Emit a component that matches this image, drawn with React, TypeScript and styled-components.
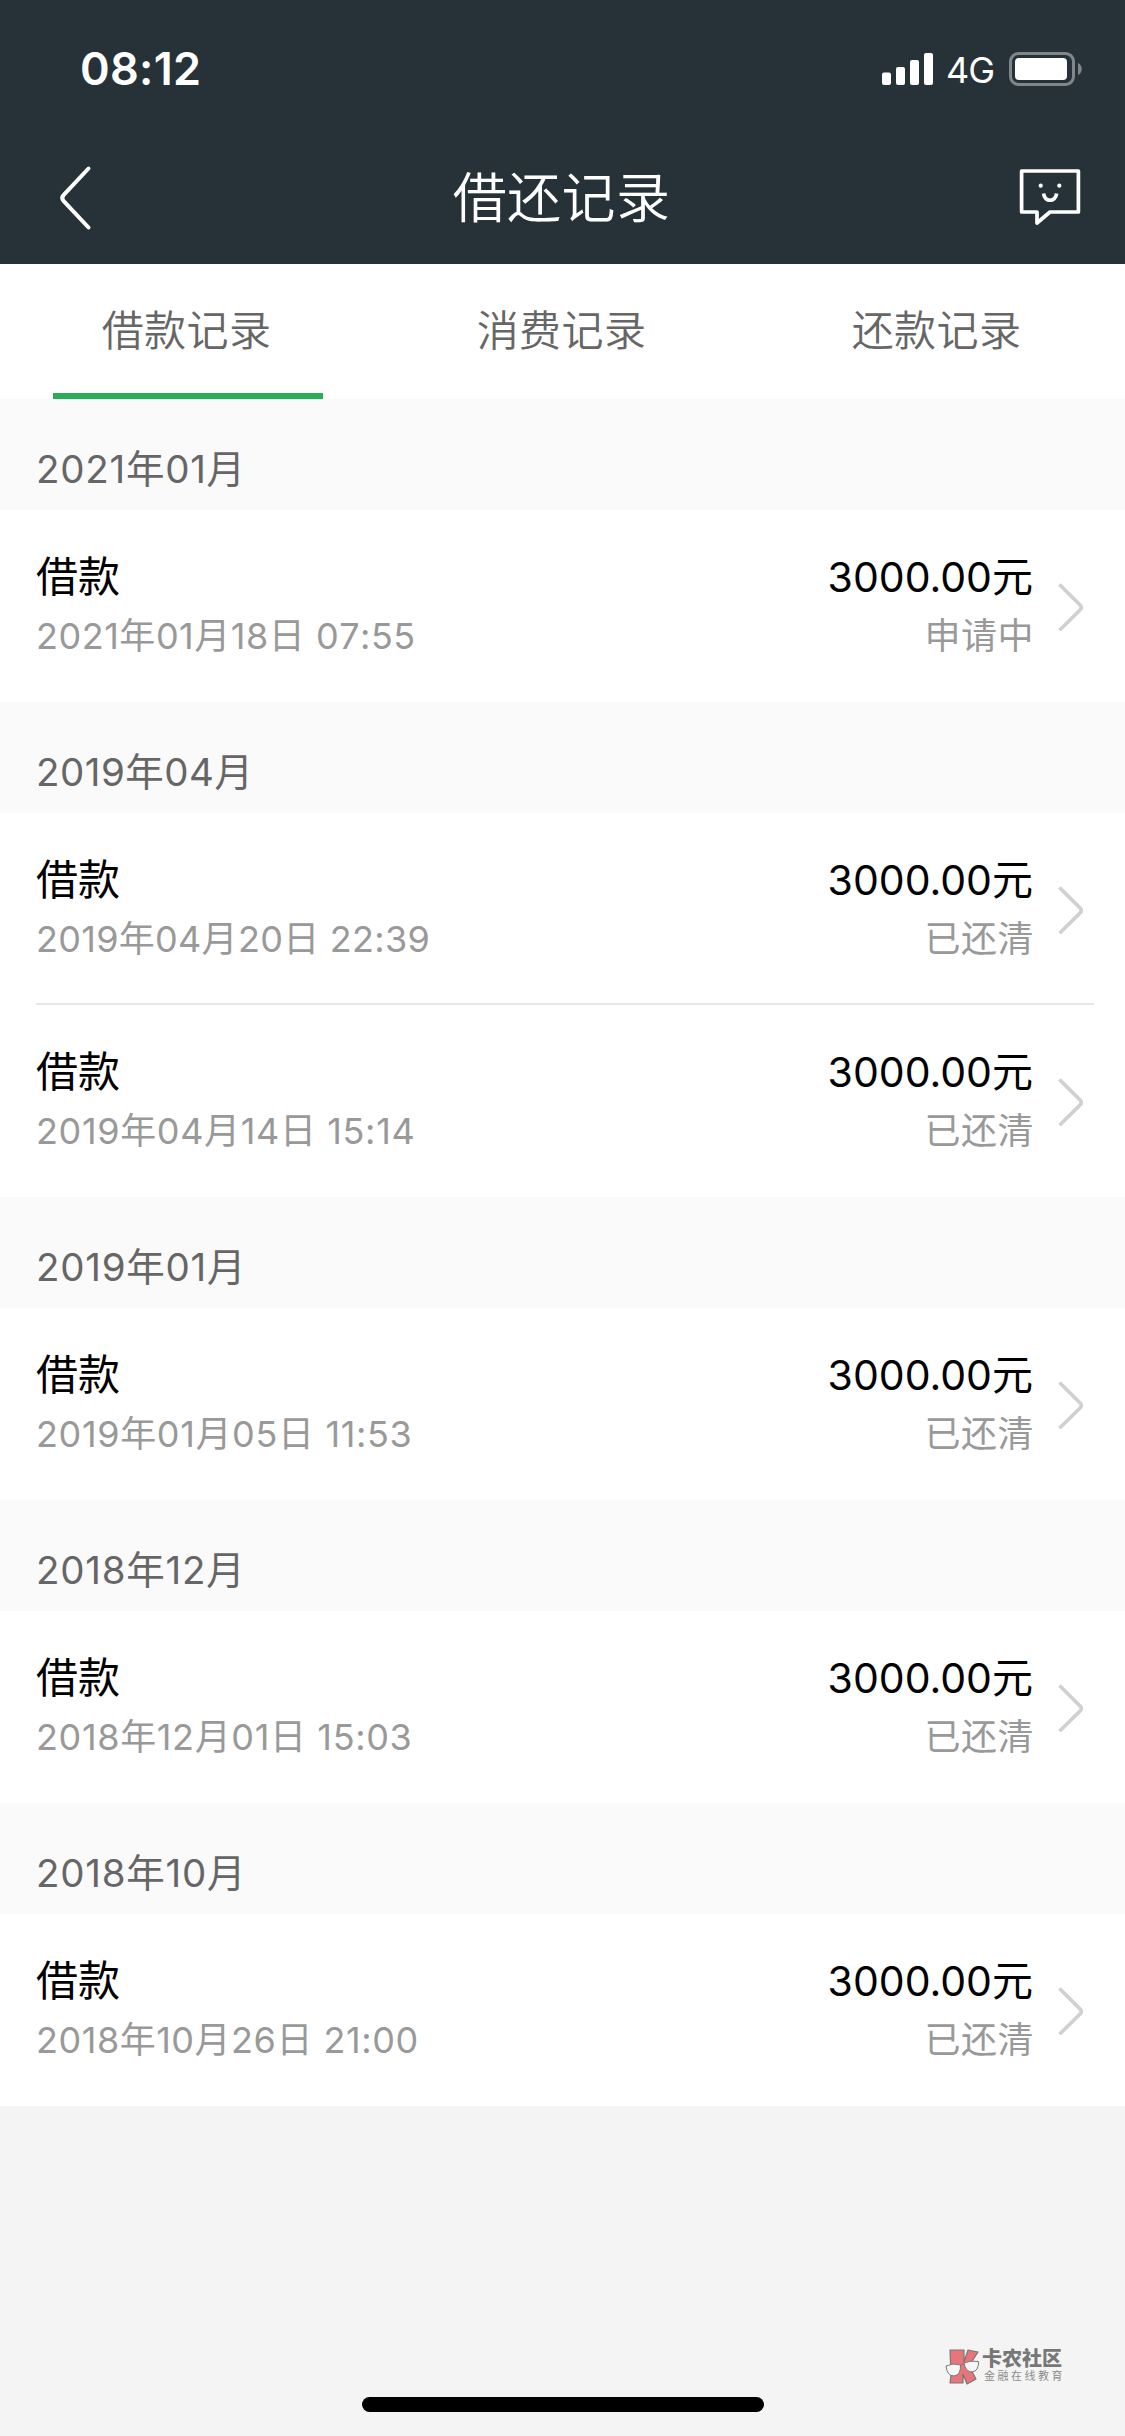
import React from "react";
import styled, { createGlobalStyle } from "styled-components";

const GlobalStyle = createGlobalStyle`
  *, *::before, *::after { box-sizing: border-box; }
  body {
    margin: 0;
    background: #f4f4f4;
    font-family: Inter, "Noto Sans CJK SC", sans-serif;
  }
`;

const Screen = styled.div`
  width: 1125px;
  height: 2436px;
  display: flex;
  flex-direction: column;
  background: #f4f4f4;
  overflow: hidden;
`;

const Header = styled.header`
  height: 264px;
  flex: none;
  background: #263238;
  color: #fff;
`;

const StatusBar = styled.div`
  height: 138px;
  display: flex;
  align-items: center;
  justify-content: space-between;
  padding: 0 43px 0 80px;
`;

const Clock = styled.span`
  font-size: 45px;
  font-weight: 600;
  line-height: 54px;
  letter-spacing: 0.3px;
`;

const Indicators = styled.div`
  display: flex;
  align-items: center;
`;

const Network = styled.span`
  width: 76px;
  padding-left: 13px;
  font-size: 36px;
  line-height: 44px;
  letter-spacing: -1px;
  padding-top: 1px;
`;

const NavBar = styled.div`
  height: 126px;
  display: grid;
  grid-template-columns: 200px 1fr 200px;
  align-items: center;
`;

const BackButton = styled.div`
  display: flex;
  padding: 0 0 6px 56px;
`;

const Title = styled.h1`
  margin: 0;
  padding-bottom: 4px;
  padding-right: 2px;
  text-align: center;
  font-size: 54px;
  line-height: 72px;
  letter-spacing: 0.4px;
  font-weight: 350;
`;

const ChatButton = styled.div`
  display: flex;
  justify-content: flex-end;
  padding: 0 43px 8px 0;
`;

const Tabs = styled.nav`
  height: 135px;
  flex: none;
  display: grid;
  grid-template-columns: repeat(3, 1fr);
  background: #fff;
`;

const Tab = styled.div<{ $active?: boolean }>`
  width: 270px;
  justify-self: center;
  padding: 37px 2px 0 0;
  text-align: center;
  font-size: 42px;
  line-height: 60px;
  letter-spacing: 0.4px;
  font-weight: 350;
  color: #666;
  border-bottom: 6px solid ${(p) => (p.$active ? "#27ae56" : "transparent")};
`;

const MonthHeading = styled.h2<{ $tracking: number }>`
  margin: 0;
  height: 111px;
  padding: 41px 36px 0;
  background: #fafafa;
  color: #666;
  font-size: 38.5px;
  line-height: 58px;
  letter-spacing: ${(p) => p.$tracking}px;
  font-kerning: none;
  font-weight: 400;
`;

const Row = styled.div<{ $divided?: boolean }>`
  height: 192px;
  display: flex;
  align-items: flex-start;
  margin-left: 36px;
  margin-right: 31px;
  padding-top: 37px;
  border-bottom: ${(p) => (p.$divided ? "2px solid #e6e6e6" : "0")};
`;

const Group = styled.section`
  background: #fff;
  flex: none;
`;

const Details = styled.div<{ $end?: boolean }>`
  flex: ${(p) => (p.$end ? "none" : "1")};
  display: flex;
  flex-direction: column;
  text-align: ${(p) => (p.$end ? "right" : "left")};
`;

const Primary = styled.div`
  color: #000;
  font-size: 41px;
  line-height: 60px;
`;

const LoanName = styled(Primary)`
  font-size: 42px;
`;

const LoanDate = styled.div<{ $tracking: number }>`
  color: #999;
  font-size: 36px;
  line-height: 58px;
  letter-spacing: ${(p) => p.$tracking}px;
  font-kerning: none;
`;

const LoanStatus = styled.div`
  color: #999;
  font-size: 36px;
  line-height: 58px;
  letter-spacing: 0.5px;
  margin-right: -1px;
`;

const Arrow = styled.div`
  width: 61px;
  padding: 34px 0 0 24px;
`;

const Footer = styled.footer`
  flex: 1;
  display: flex;
  flex-direction: column;
  justify-content: flex-end;
  align-items: center;
  padding-bottom: 24px;
`;

const Brand = styled.div`
  align-self: flex-end;
  display: flex;
  gap: 3px;
  margin: 0 61px 12px 0;
`;

const BrandText = styled.div`
  width: 82px;
  white-space: nowrap;
`;

const BrandName = styled.div`
  font-size: 20px;
  line-height: 20px;
  font-weight: 900;
  color: #777;
`;

const BrandTagline = styled.div`
  padding-left: 2px;
  font-size: 11px;
  line-height: 15px;
  letter-spacing: 2.5px;
  color: #8c8c8c;
`;

const HomeIndicator = styled.div`
  width: 402px;
  height: 15px;
  border-radius: 8px;
  background: #000;
`;

const SignalIcon = () => (
  <svg width="51" height="34" viewBox="0 0 51 34" fill="#fff">
    <rect x="0" y="20.5" width="9" height="12.5" rx="2" />
    <rect x="14" y="15" width="9" height="18" rx="2" />
    <rect x="28" y="8" width="9" height="25" rx="2" />
    <rect x="42" y="1" width="9" height="32" rx="2" />
  </svg>
);

const BatteryIcon = () => (
  <svg width="73" height="34" viewBox="0 0 73 34">
    <rect x="1.5" y="1.5" width="63" height="31" rx="8" fill="none" stroke="#7f878b" strokeWidth="3" />
    <rect x="6" y="6" width="52" height="22" rx="4" fill="#fff" />
    <path d="M69 11c5 2 5 10 0 12z" fill="#7f878b" />
  </svg>
);

const BackIcon = () => (
  <svg width="38" height="66" viewBox="0 0 38 66" fill="none" stroke="#fff" strokeWidth="4" strokeLinecap="round">
    <path d="M32.5 3.5 7.5 30.2Q5 33 7.5 35.8L32.5 62.5" />
  </svg>
);

const ChatIcon = () => (
  <svg width="64" height="60" viewBox="0 0 64 60" fill="none" stroke="#fff" strokeWidth="3.7">
    <path d="M3.6 4H60.4V45H32L19 56V45H3.6Z" strokeLinejoin="round" />
    <path d="M25.6 26.5C26.5 35.5 37.5 35.5 38.6 26.5" />
    <circle cx="22.7" cy="18.7" r="2.1" fill="#fff" stroke="none" />
    <circle cx="41.3" cy="18.7" r="2.1" fill="#fff" stroke="none" />
  </svg>
);

const ChevronIcon = () => (
  <svg width="28" height="50" viewBox="0 0 28 50" fill="none" stroke="#d0d0d0" strokeWidth="3.6">
    <path d="M2.500 3.500 23.300 24.200Q25.300 26.500 23.300 28.800L2.500 49.200" />
  </svg>
);

const BrandIcon = () => (
  <svg width="34" height="36" viewBox="0 0 34 36">
    <g fill="#e8757c" stroke="#777" strokeWidth="1.2" strokeLinejoin="round">
      <path d="M5 1H19V13L23 1L33 3L24 17L31 30L22 35L18 25V34H5L6 26Z" />
    </g>
    <g fill="#f6f6f6" stroke="#777" strokeWidth="1">
      <path d="M1 17Q8 13.500 15.500 16Q16 26 9 27Q2 27 1 17Z" />
      <path d="M19 14Q26 11 33.500 12.500Q34 22 27 23Q20.500 23 19 14Z" />
      <path d="M15 17Q17 14 20 15" fill="none" />
    </g>
  </svg>
);

interface Loan {
  date: string;
  status: string;
}

const groups: { month: string; loans: Loan[] }[] = [
  { month: "2021年01月", loans: [{ date: "2021年01月18日 07:55", status: "申请中" }] },
  {
    month: "2019年04月",
    loans: [
      { date: "2019年04月20日 22:39", status: "已还清" },
      { date: "2019年04月14日 15:14", status: "已还清" },
    ],
  },
  { month: "2019年01月", loans: [{ date: "2019年01月05日 11:53", status: "已还清" }] },
  { month: "2018年12月", loans: [{ date: "2018年12月01日 15:03", status: "已还清" }] },
  { month: "2018年10月", loans: [{ date: "2018年10月26日 21:00", status: "已还清" }] },
];

// The digit 1 is narrow in Inter; strings with many of them get looser tracking.
const trackingFor = (text: string, base: number) => {
  const ones = text.split("1").length - 1;
  return base + (ones * 2) / text.length;
};

export default function App() {
  return (
    <Screen lang="zh-CN">
      <GlobalStyle />
      <Header>
        <StatusBar>
          <Clock>08:12</Clock>
          <Indicators>
            <SignalIcon />
            <Network>4G</Network>
            <BatteryIcon />
          </Indicators>
        </StatusBar>
        <NavBar>
          <BackButton>
            <BackIcon />
          </BackButton>
          <Title>借还记录</Title>
          <ChatButton>
            <ChatIcon />
          </ChatButton>
        </NavBar>
      </Header>
      <Tabs>
        <Tab $active>借款记录</Tab>
        <Tab>消费记录</Tab>
        <Tab>还款记录</Tab>
      </Tabs>
      {groups.map((group) => (
        <Group key={group.month}>
          <MonthHeading $tracking={trackingFor(group.month, 0.25)}>{group.month}</MonthHeading>
          {group.loans.map((loan, i) => (
            <Row key={loan.date} $divided={i < group.loans.length - 1}>
              <Details>
                <LoanName>借款</LoanName>
                <LoanDate $tracking={trackingFor(loan.date, 0.17)}>{loan.date}</LoanDate>
              </Details>
              <Details $end>
                <Primary>3000.00元</Primary>
                <LoanStatus>{loan.status}</LoanStatus>
              </Details>
              <Arrow>
                <ChevronIcon />
              </Arrow>
            </Row>
          ))}
        </Group>
      ))}
      <Footer>
        <Brand>
          <BrandIcon />
          <BrandText>
            <BrandName>卡农社区</BrandName>
            <BrandTagline>金融在线教育</BrandTagline>
          </BrandText>
        </Brand>
        <HomeIndicator />
      </Footer>
    </Screen>
  );
}
